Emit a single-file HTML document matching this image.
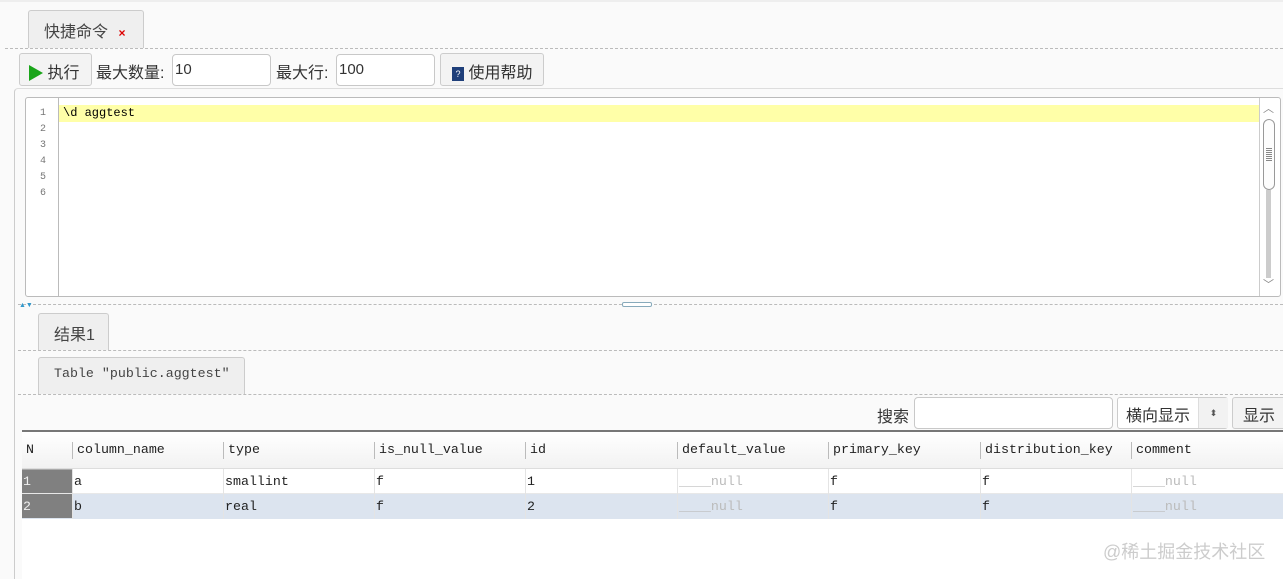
<!DOCTYPE html>
<html><head><meta charset="utf-8"><style>
*{box-sizing:border-box;margin:0;padding:0}
body{width:1283px;height:579px;background:#fafafa;font-family:"Liberation Sans","Noto Sans CJK SC",sans-serif;font-size:16px;color:#333;position:relative;overflow:hidden}
.a{position:absolute}
.dot{position:absolute;height:0;border-top:1px dashed #bbb}
.tab{position:absolute;background:#efefef;border:1px solid #ccc;border-bottom:none;border-radius:3px 3px 0 0;color:#444}
.btn{position:absolute;background:#f3f3f3;border:1px solid #ccc;border-radius:3px}
.inp{position:absolute;background:#fff;border:1px solid #c8c8c8;border-radius:4px;font-family:"Liberation Sans",sans-serif;font-size:15px;padding:6px 0 0 2px}
.mono{font-family:"Liberation Mono","Noto Sans CJK SC",monospace}
.ser{font-family:"Liberation Mono","Noto Serif CJK SC",monospace;font-size:13.3px}
</style></head><body>
<div class="a" style="left:0;top:0;width:1283px;height:2px;background:#eee"></div>
<div class="tab" style="left:28px;top:10px;width:116px;height:38px;padding:7px 0 0 15px">快捷命令 <span style="color:#d00;font-size:12px;margin-left:6px;font-weight:bold">×</span></div>
<div class="dot" style="left:5px;top:48px;width:1278px"></div>
<div class="btn" style="left:19px;top:53px;width:73px;height:33px;padding:5px 0 0 9px"><span style="display:inline-block;width:0;height:0;border-left:14px solid #1aa51a;border-top:8px solid transparent;border-bottom:8px solid transparent;vertical-align:-3px"></span> 执行</div>
<div class="a" style="left:96px;top:59px">最大数量:</div>
<div class="inp" style="left:172px;top:54px;width:99px;height:32px">10</div>
<div class="a" style="left:276px;top:59px">最大行:</div>
<div class="inp" style="left:336px;top:54px;width:99px;height:32px">100</div>
<div class="btn" style="left:440px;top:53px;width:104px;height:33px;padding:5px 0 0 11px"><span style="display:inline-block;width:12px;height:14px;background:#1f3f7a;color:#fff;font-size:9px;text-align:center;line-height:14px;vertical-align:1px">?</span> 使用帮助</div>
<div class="a" style="left:14px;top:88px;width:1269px;height:491px;border-left:1px solid #ccc;border-top:1px solid #ddd;border-radius:4px 0 0 0"></div>
<div class="a" style="left:25px;top:97px;width:1256px;height:200px;background:#fff;border:1px solid #bbb;border-radius:3px"></div>
<div class="a" style="left:58px;top:98px;width:1px;height:198px;background:#bbb"></div>
<div class="a mono" style="left:26px;top:106px;width:20px;text-align:right;font-size:10px;color:#777;line-height:16px">1<br>2<br>3<br>4<br>5<br>6</div>
<div class="a mono" style="left:59px;top:105px;width:1200px;height:17px;background:#ffffa8;font-size:12px;padding:1px 0 0 4px;color:#000">\d aggtest</div>
<div class="a" style="left:1259px;top:98px;width:1px;height:198px;background:#ccc"></div>
<div class="a" style="left:1263px;top:119px;width:12px;height:71px;border:1px solid #999;border-radius:6px;background:#fdfdfd"></div>
<div class="a" style="left:1266px;top:148px;width:6px;height:14px;background:repeating-linear-gradient(#888 0 1px,transparent 1px 2px)"></div>
<div class="a" style="left:1266px;top:190px;width:5px;height:88px;background:#ccc"></div>
<div class="a" style="left:1263px;top:100px;font-size:11px;color:#888">︿</div>
<div class="a" style="left:1263px;top:276px;font-size:11px;color:#888">﹀</div>
<div class="dot" style="left:18px;top:304px;width:1265px"></div>
<div class="a" style="left:19px;top:302px;font-size:7px;color:#39c">▲▼</div>
<div class="a" style="left:622px;top:302px;width:30px;height:5px;border:1px solid #8ab;border-radius:2px;background:#fff"></div>
<div class="tab" style="left:38px;top:313px;width:71px;height:37px;padding:7px 0 0 15px">结果1</div>
<div class="dot" style="left:18px;top:350px;width:1265px"></div>
<div class="tab ser" style="left:38px;top:357px;width:207px;height:37px;padding:8px 0 0 15px">Table "public.aggtest"</div>
<div class="dot" style="left:18px;top:394px;width:1265px"></div>
<div class="a" style="left:877px;top:403px">搜索</div>
<div class="inp" style="left:914px;top:397px;width:199px;height:32px"></div>
<div class="btn" style="left:1117px;top:397px;width:111px;height:32px;background:#fff;padding:4px 0 0 8px">横向显示<span style="position:absolute;left:80px;top:0;width:30px;height:30px;background:#f2f2f2;border-left:1px solid #ddd;font-size:9px;text-align:center;line-height:30px;color:#555">⬍</span></div>
<div class="btn" style="left:1232px;top:397px;width:60px;height:32px;padding:4px 0 0 10px">显示</div>
<div class="a" style="left:22px;top:430px;width:1261px;height:149px;background:#fff;border-top:2px solid #777"></div>
<div class="a" style="left:22px;top:432px;width:1261px;height:37px;background:linear-gradient(#fff,#f2f2f2);border-bottom:1px solid #ddd"></div>
<div class="a" style="left:22px;top:494px;width:1261px;height:25px;background:#dce4ef"></div>
<div class="a" style="left:22px;top:469px;width:50px;height:49px;background:#808080;border-top:1px solid #aaa"></div>
<div class="a" style="left:22px;top:493px;width:1261px;height:1px;background:#e8e8e8"></div>
<div class="a ser" style="left:22px;top:432px;width:1261px;height:87px;line-height:16px;color:#222">
<div class="a" style="left:4px;top:10px">N</div>
<div class="a" style="left:1px;top:42px;color:#eee">1</div><div class="a" style="left:1px;top:67px;color:#eee">2</div>
<script>
var xs=[50,201,352,503,655,806,958,1109];
var h=["column_name","type","is_null_value","id","default_value","primary_key","distribution_key","comment"];
var r1=["a","smallint","f","1",null,"f","f",null],r2=["b","real","f","2",null,"f","f",null];
var s="";
for(var i=0;i<8;i++){
s+='<div class="a" style="left:'+xs[i]+'px;top:10px;width:1px;height:17px;background:#bbb"></div>';
s+='<div class="a" style="left:'+(xs[i]+5)+'px;top:10px">'+h[i]+'</div>';
s+='<div class="a" style="left:'+xs[i]+'px;top:37px;width:1px;height:50px;background:#e4e4e4"></div>';
[[r1,42],[r2,67]].forEach(function(p){var v=p[0][i];
s+='<div class="a" style="left:'+(xs[i]+2)+'px;top:'+p[1]+'px;'+(v===null?'color:#bbb':'')+'">'+(v===null?'____null':v)+'</div>';});
}
document.write(s);
</script>
</div>
<div class="a" style="left:1103px;top:538px;font-size:18px;color:#ccc">@稀土掘金技术社区</div>
</body></html>
